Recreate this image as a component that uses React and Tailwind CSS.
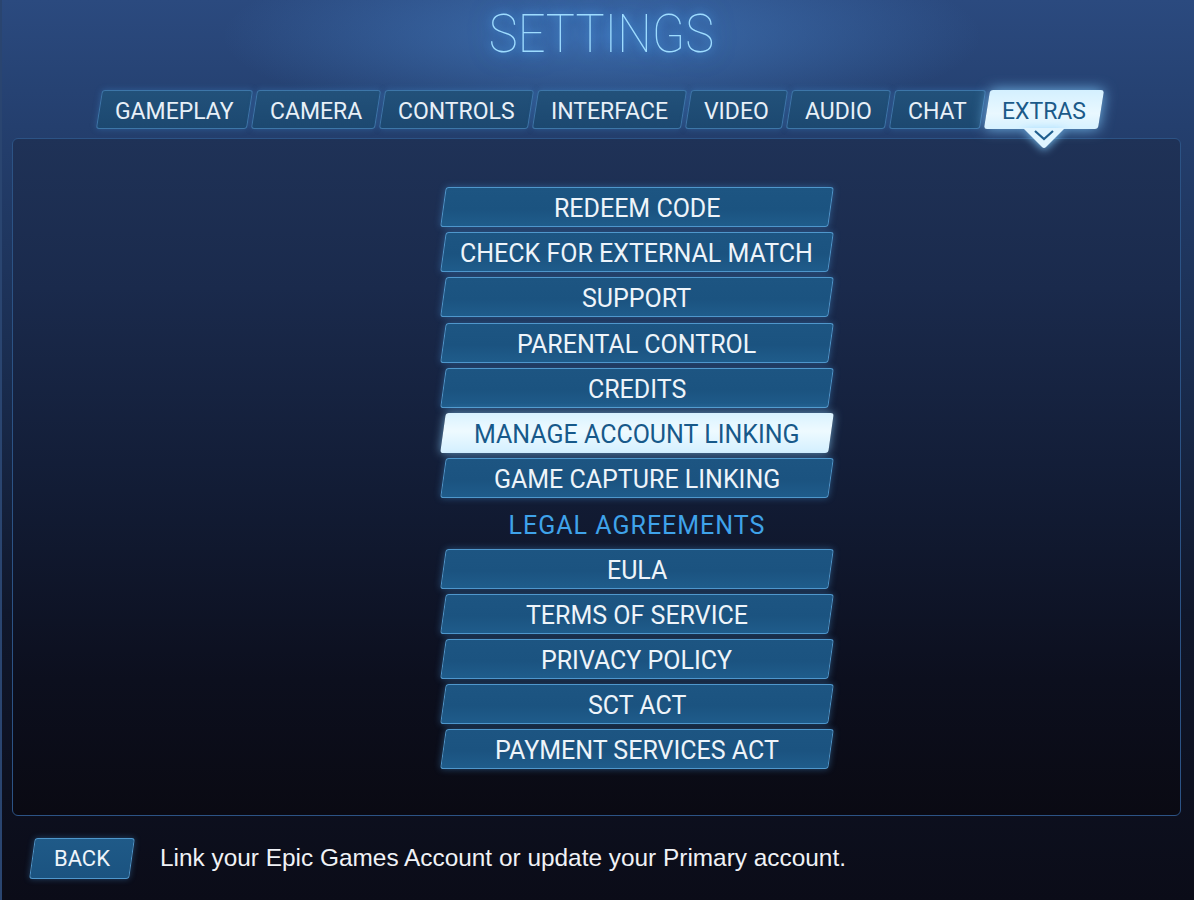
import React from 'react'

const tabs = ['GAMEPLAY', 'CAMERA', 'CONTROLS', 'INTERFACE', 'VIDEO', 'AUDIO', 'CHAT', 'EXTRAS']

const items = [
  { label: 'REDEEM CODE' },
  { label: 'CHECK FOR EXTERNAL MATCH' },
  { label: 'SUPPORT' },
  { label: 'PARENTAL CONTROL' },
  { label: 'CREDITS' },
  { label: 'MANAGE ACCOUNT LINKING', active: true },
  { label: 'GAME CAPTURE LINKING' },
  { label: 'LEGAL AGREEMENTS', header: true },
  { label: 'EULA' },
  { label: 'TERMS OF SERVICE' },
  { label: 'PRIVACY POLICY' },
  { label: 'SCT ACT' },
  { label: 'PAYMENT SERVICES ACT' },
]

const ui = { fontFamily: 'Roboto, "Noto Sans", sans-serif' }

function Tab({ label, active }) {
  if (active) {
    return (
      <div className="relative">
        <div className="h-[39px] px-[15px] flex items-center -skew-x-9 rounded-[3px] bg-[linear-gradient(180deg,#d4f0ff_0%,#e9f8ff_60%,#d6f1ff_100%)] shadow-[0_0_14px_rgba(130,205,255,0.85)]">
          <span className="skew-x-9 pt-[3px] text-[23px] leading-none text-[#1b5a89]">{label}</span>
        </div>
        {/* pointer under the active tab */}
        <svg
          className="absolute left-1/2 -translate-x-1/2 top-[38px] drop-shadow-[0_2px_4px_rgba(130,205,255,0.8)]"
          width="42"
          height="21"
          viewBox="0 0 42 21"
        >
          <path d="M0 0 H42 L23 19 Q21 21 19 19 Z" fill="#dff4ff" />
          <path d="M12 3 L21 11 L30 3" fill="none" stroke="#1f5e8e" strokeWidth="2.2" />
        </svg>
      </div>
    )
  }
  return (
    <div className="h-[39px] px-[15px] flex items-center -skew-x-9 rounded-[3px] border border-[#3d76a8] bg-[linear-gradient(180deg,#22517a_0%,#1c4870_100%)] shadow-[0_0_6px_rgba(70,150,220,0.35)]">
      <span className="skew-x-9 pt-[3px] text-[23px] leading-none text-[#e8f0f8]">{label}</span>
    </div>
  )
}

function MenuButton({ label, active }) {
  if (active) {
    return (
      <div className="h-10 -skew-x-8 rounded-[3px] flex items-center justify-center bg-[linear-gradient(180deg,#d9f2ff_0%,#eefaff_45%,#d3efff_100%)] shadow-[0_0_10px_rgba(140,210,255,0.7)]">
        <span className="skew-x-8 pt-[2px] text-[25px] leading-none text-[#17598a]">{label}</span>
      </div>
    )
  }
  return (
    <div className="h-10 -skew-x-8 rounded-[3px] flex items-center justify-center border border-[#4f97cc] bg-[linear-gradient(180deg,#1d5582_0%,#1b5380_55%,#1f5c8b_100%)] shadow-[0_0_7px_rgba(70,150,220,0.45)]">
      <span className="skew-x-8 pt-[2px] text-[25px] leading-none text-[#eef4fa]">{label}</span>
    </div>
  )
}

export default function App() {
  return (
    <div
      style={ui}
      className="w-[1194px] h-[900px] overflow-hidden flex flex-col border-l-2 border-[#2a4570] bg-[radial-gradient(ellipse_380px_90px_at_600px_36px,rgba(75,140,215,0.55),transparent),linear-gradient(180deg,#2b4a7f_0%,#243f6e_14%,#1a2d50_40%,#10172b_68%,#0b0c18_100%)]"
    >
      {/* Title */}
      <div className="h-[90px] flex justify-center pt-[8px] pl-[6px]">
        <h1
          style={{ fontFamily: 'Roboto, "DejaVu Sans", sans-serif' }}
          className="text-[53px] font-thin leading-none scale-x-92 text-[#9edcff] [text-shadow:0_0_10px_rgba(90,180,255,0.9),0_0_24px_rgba(60,140,230,0.7)]"
        >
          SETTINGS
        </h1>
      </div>

      {/* Tabs */}
      <div className="flex justify-center gap-[4px] pl-[4px]">
        {tabs.map((t) => (
          <Tab key={t} label={t} active={t === 'EXTRAS'} />
        ))}
      </div>

      {/* Panel */}
      <div className="mt-[9px] ml-[10px] mr-[13px] h-[678px] rounded-[6px] border border-[#2c5385] bg-[linear-gradient(180deg,#1f3257_0%,#1a2a4c_22%,#121c35_52%,#0c0f1e_80%,#0a0a13_100%)]">
        <div className="w-[388px] ml-[430px] pt-[48px] flex flex-col gap-[5.2px]">
          {items.map((it) =>
            it.header ? (
              <div key={it.label} className="h-10 flex items-center justify-center">
                <span className="pt-[4px] text-[25px] tracking-[1px] leading-none text-[#3fa3ea]">{it.label}</span>
              </div>
            ) : (
              <MenuButton key={it.label} label={it.label} active={it.active} />
            )
          )}
        </div>
      </div>

      {/* Bottom bar */}
      <div className="flex items-center mt-[22px] ml-[30px]">
        <div className="h-[41px] w-[100px] -skew-x-8 rounded-[3px] flex items-center justify-center border border-[#4f97cc] bg-[linear-gradient(180deg,#1f5a88_0%,#1b5380_100%)] shadow-[0_0_6px_rgba(70,150,220,0.4)]">
          <span className="skew-x-8 text-[22px] leading-none text-[#eef4fa]">BACK</span>
        </div>
        <p
          style={{ fontFamily: '"Liberation Sans", Arial, sans-serif' }}
          className="ml-[28px] text-[24.4px] leading-none text-[#f0f2f6]"
        >
          Link your Epic Games Account or update your Primary account.
        </p>
      </div>
    </div>
  )
}
